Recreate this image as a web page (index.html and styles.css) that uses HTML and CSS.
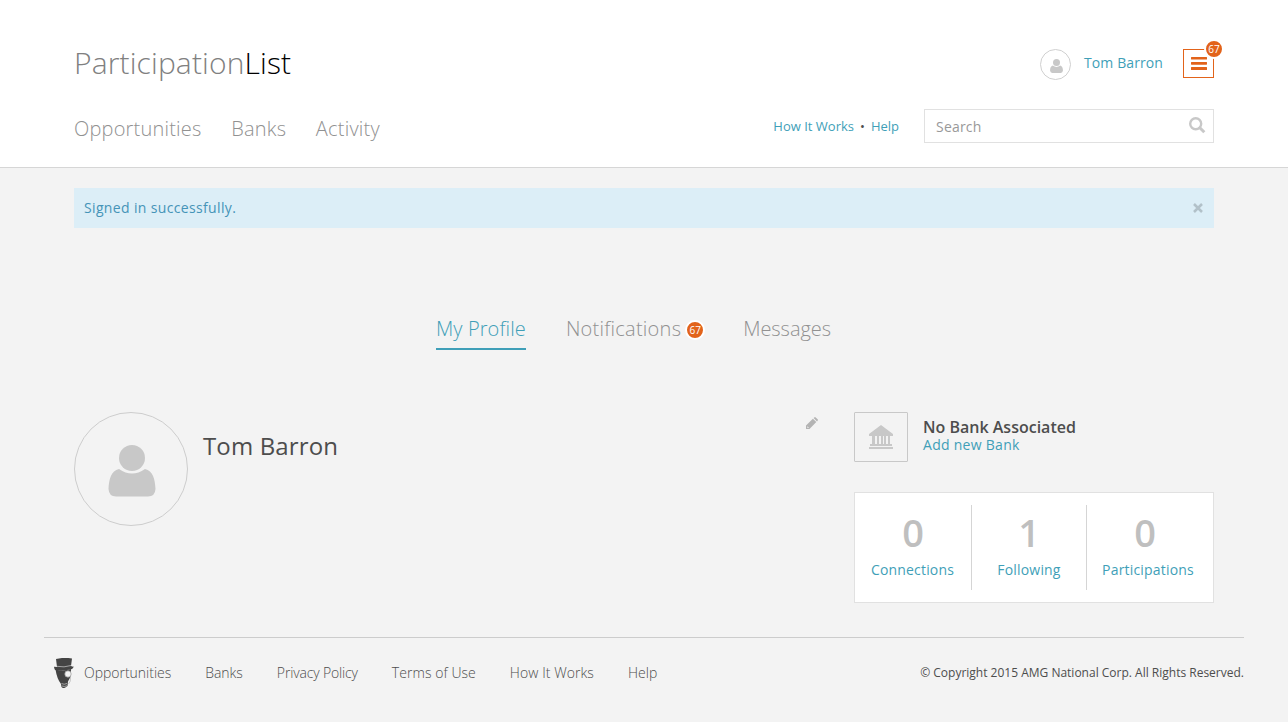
FILE: index.html
```html
<!DOCTYPE html>
<html lang="en">
<head>
<meta charset="utf-8">
<title>ParticipationList</title>
<link rel="stylesheet" href="styles.css">
</head>
<body>
<header class="site-header">
  <div class="container header-grid">
    <a class="logo">Participation<span class="logo-dark">List</span></a>
    <div class="account">
      <span class="avatar-small"><svg width="13" height="14" viewBox="0 0 48 52"><circle cx="24" cy="13" r="13"/><path d="M10 24Q24 35 38 24C45 26 48 34 48 43Q47 52 40 52H8Q1 52 0 43C0 34 3 26 10 24Z"/></svg></span>
      <a class="account-name">Tom Barron</a>
      <span class="menu-button"><svg width="16" height="13" viewBox="0 0 16 13"><path d="M.5 0h15q.5 0 .5.5v1.500q0 .6-.5.6H.5q-.5 0-.5-.6V.5Q0 0 .5 0zM.5 5h15q.5 0 .5.5v1.500q0 .8-.5.8H.5q-.5 0-.5-.8V5.500Q0 5 .5 5zM.5 10h15q.5 0 .5.5v2q0 .5-.5.5H.5q-.5 0-.5-.5v-2q0-.5.5-.5z"/></svg><span class="badge menu-badge">67</span></span>
    </div>
    <nav class="main-nav"><a>Opportunities</a><a>Banks</a><a>Activity</a></nav>
    <div class="tools">
      <div class="help-links"><a>How It Works</a><span class="dot">•</span><a>Help</a></div>
      <div class="search"><span>Search</span><svg width="17" height="17" viewBox="0 0 17 17"><circle cx="6.7" cy="6.700" r="5.500"/><path d="M10.800 10.800L15.300 15.200"/></svg></div>
    </div>
  </div>
</header>
<main class="container">
  <div class="alert"><span>Signed in successfully.</span><svg class="close" width="10" height="10" viewBox="0 0 10 10"><path d="M1 1L9 9M9 1L1 9"/></svg></div>
  <nav class="tabs"><a class="tab active">My Profile</a><a class="tab">Notifications<span class="badge">67</span></a><a class="tab">Messages</a></nav>
  <div class="profile-layout">
    <section class="profile">
      <span class="avatar"><svg width="48" height="52" viewBox="0 0 48 52"><circle cx="24" cy="13" r="13"/><path d="M11 24Q24 33 37 24C45 26 47 34 47.500 44Q47 51.500 40 51.500H8Q1 51.500 .5 44C1 34 3 26 11 24Z"/></svg></span>
      <h1>Tom Barron</h1>
      <svg class="edit" width="12" height="12" viewBox="0 0 12 12"><path fill-rule="evenodd" d="M0 12V8.500L6.900 1.700 10.300 5.100 3.500 12ZM1.300 9.200V10.500L1.800 11 3 10.800ZM7.600 1L8.300.4Q9-.3 9.700.4L11.600 2.300Q12.300 3 11.600 3.700L11 4.400Z"/></svg>
    </section>
    <aside class="sidebar">
      <div class="bank">
        <span class="bank-icon"><svg width="24" height="24" viewBox="0 0 24 24"><path d="M12 0L24 9V11H0V9ZM3 11h3v8H3zM8 11h2v8H8zM12 11h2v8h-2zM15 11h2v8h-2zM19 11h2v8h-2zM1 19h22v2H1zM0 22h24v2H0z"/></svg></span>
        <div class="bank-text"><strong>No Bank Associated</strong><a>Add new Bank</a></div>
      </div>
      <div class="stats">
        <div class="stat"><b>0</b><a>Connections</a></div>
        <div class="stat"><b>1</b><a>Following</a></div>
        <div class="stat"><b>0</b><a>Participations</a></div>
      </div>
    </aside>
  </div>
</main>
<footer class="footer">
  <svg class="mascot" width="20" height="30" viewBox="0 0 20 30"><path class="ink" d="M2 1Q10-1 18 .5L17 8Q19 9 20 8.500Q19 11 16 11.500Q8 13.500 1 12Q0 10 0 8.800L3 9Z"/><path class="ink" d="M1.500 11.500Q9 13.500 17 11L17 18 14 23.500 13.500 28Q10 31.500 7.500 29L7 26Q3 21 1.500 11.500Z"/><path class="band" d="M3 8.300Q10 9.800 17 7.500"/><circle class="lens" cx="14" cy="16" r="3.200"/><path class="chain" d="M16.500 18.500Q17 24 14.500 26M7.500 25.500Q10 27 13 25.500M8 28Q10 29 13 27.800"/></svg>
  <nav class="footer-nav"><a>Opportunities</a><a>Banks</a><a class="privacy">Privacy Policy</a><a class="wide">Terms of Use</a><a class="wide">How It Works</a><a class="wide">Help</a></nav>
  <span class="copyright">© Copyright 2015 AMG National Corp. All Rights Reserved.</span>
</footer>
</body>
</html>
```
FILE: styles.css
```css
* { box-sizing: border-box; }
body {
  margin: 0;
  background: #f3f3f3;
  color: #4d4d4d;
  font: 14px/20px "Open Sans", sans-serif;
  white-space: nowrap;
}
a { color: #3f9fb8; }
svg { display: block; flex: none; }
.container { width: 1140px; margin: 0 auto; }
.site-header {
  height: 168px;
  background: #fff;
  border-bottom: 1px solid #d6d6d6;
}
.header-grid {
  display: grid;
  grid-template-columns: 1fr auto;
  grid-template-rows: 60px 34px;
  padding-top: 49px;
}
.logo {
  margin-top: -7px;
  color: #808080;
  font-size: 30px;
  font-weight: 300;
  letter-spacing: .13px;
  line-height: 42px;
}
.logo-dark { color: #000; }
.account { display: flex; justify-content: flex-end; align-items: flex-start; }
.avatar-small {
  display: grid;
  place-items: center;
  width: 31px;
  height: 31px;
  padding: 2px 0 0 1px;
  border: 1px solid #d0d0d0;
  border-radius: 50%;
  fill: #c8c8c8;
}
.account-name { width: 79px; margin: 4px 20px 0 13px; letter-spacing: .1px; }
.menu-button {
  position: relative;
  display: grid;
  place-items: center;
  width: 31px;
  height: 29px;
  border: 1px solid #e2631a;
  fill: #e2631a;
}
.badge {
  display: inline-block;
  width: 20px;
  height: 20px;
  border: 2px solid #fff;
  border-radius: 50%;
  background: #e2631a;
  color: #fff;
  font-size: 10px;
  font-weight: 400;
  letter-spacing: 0;
  line-height: 16px;
  text-align: center;
}
.menu-badge { position: absolute; top: -11px; right: -11px; }
.main-nav { display: flex; gap: 29.7px; margin-top: 6px; }
.main-nav a { color: #919191; font-size: 20px; font-weight: 300; letter-spacing: .2px; line-height: 28px; }
.tools { display: flex; gap: 25px; }
.help-links { display: flex; margin-top: 7px; font-size: 13px; }
.dot { margin: 0 6px; }
.search {
  display: flex;
  justify-content: space-between;
  width: 290px;
  height: 34px;
  padding: 7px 7px 7px 11px;
  border: 1px solid #e1e1e1;
  color: #999;
  letter-spacing: .2px;
}
.search svg { fill: none; stroke: #c8c8c8; stroke-width: 2.4; }
.search path { stroke-width: 3; }
.alert {
  display: flex;
  align-items: center;
  justify-content: space-between;
  height: 40px;
  margin-top: 20px;
  padding: 0 11px 0 10px;
  background: #dceef7;
  color: #4594b8;
  letter-spacing: .35px;
}
.close { stroke: #b2c1c9; stroke-width: 2.5; }
.tabs { display: flex; gap: 40px; margin: 85px 0 0 362px; }
.tab {
  display: flex;
  align-items: center;
  height: 37px;
  padding-bottom: 3px;
  border-bottom: 2px solid transparent;
  color: #919191;
  font-size: 20px;
  font-weight: 300;
  letter-spacing: .25px;
  line-height: 28px;
}
.active { border-color: #3f9fb8; color: #3f9fb8; letter-spacing: .1px; }
.tab:last-child { letter-spacing: -.05px; }
.tab .badge { margin: 1px -2px 0 4px; }
.profile-layout { display: grid; grid-template-columns: 744px 360px; gap: 36px; margin-top: 62px; }
.profile { display: flex; align-items: flex-start; }
.avatar {
  display: grid;
  place-items: center;
  width: 114px;
  height: 114px;
  padding: 4px 0 0 2px;
  border: 1px solid #cdcdcd;
  border-radius: 50%;
  fill: #c8c8c8;
}
.avatar svg { margin-left: -1px; }
h1 { margin: 17px 0 0 15px; font-size: 24px; font-weight: 400; letter-spacing: .14px; line-height: 33px; }
.edit { margin: 5px 0 0 auto; fill: #b3b3b3; }
.bank { display: flex; gap: 15px; }
.bank-icon {
  display: grid;
  place-items: center;
  width: 54px;
  height: 50px;
  border: 1px solid #c8c8c8;
  border-radius: 1px;
  fill: #c8c8c8;
}
.bank-text { display: flex; flex-direction: column; padding-top: 5px; }
.bank-text strong { font-size: 16px; font-weight: 600; line-height: 20px; }
.bank-text a { line-height: 16px; letter-spacing: .28px; }
.stats {
  display: grid;
  grid-template-columns: 117px 115px 116px;
  height: 111px;
  margin-top: 30px;
  padding: 12px 0;
  background: #fff;
  border: 1px solid #e1e1e1;
}
.stat { display: flex; flex-direction: column; align-items: center; border-right: 1px solid #d5d5d5; }
.stat:first-child a { margin-right: 1px; }
.stat:last-child { border-right: 0; }
.stat:last-child a { margin-left: 6px; }
.stat b { margin: 2px 0 3px; color: #bfbfbf; font-size: 38px; font-weight: 600; line-height: 50px; }
.stat a { letter-spacing: .18px; }
.footer {
  display: flex;
  align-items: flex-start;
  width: 1200px;
  margin: 34px auto 0;
  padding: 20px 0 0 10px;
  border-top: 1px solid #ccc;
}
.footer-nav { display: flex; gap: 34px; margin: 5px 0 0 10px; }
.footer-nav a { color: #4d4d4d; font-weight: 300; letter-spacing: -.02px; }
.footer-nav .privacy { letter-spacing: -.16px; }
.footer-nav .wide { letter-spacing: .06px; }
.copyright { margin: 5px 0 0 auto; font-size: 12px; }
.ink { fill: #444; }
.band, .chain { fill: none; stroke: #bbb; stroke-width: .8; }
.lens { fill: #f3f3f3; stroke: #999; stroke-width: .7; }
```
